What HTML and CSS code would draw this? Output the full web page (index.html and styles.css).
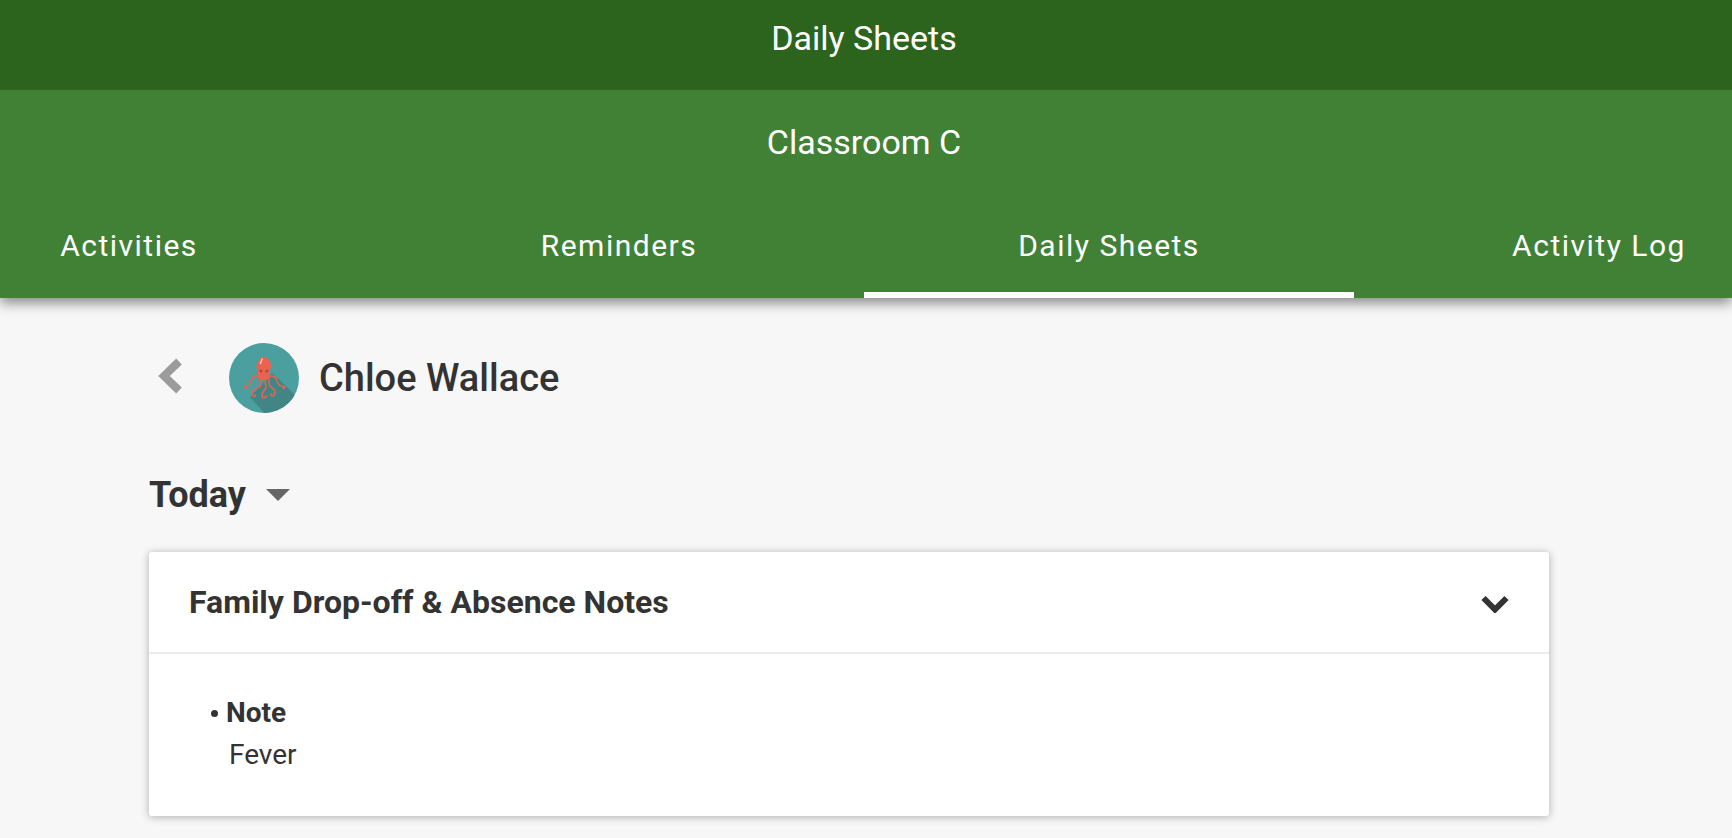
FILE: index.html
```html
<!DOCTYPE html>
<html lang="en">
<head>
    <meta charset="UTF-8">
    <meta name="viewport" content="width=device-width, initial-scale=1.0">
    <title>Daily Sheets</title>
    <link rel="stylesheet" href="styles.css">
</head>
<body>
    <header class="app-bar">Daily Sheets</header>
    <div class="class-bar">
        <div class="class-name">Classroom C</div>
        <nav class="tabs">
            <div class="tabs-row">
                <a class="tab">Activities</a>
                <a class="tab">Reminders</a>
                <a class="tab active">Daily Sheets</a>
                <a class="tab">Activity Log</a>
            </div>
        </nav>
    </div>
    <main class="content">
        <div class="child-row">
            <svg class="back-icon" width="26" height="36" viewBox="0 0 26 36">
                <path d="M21 3.5 L6 18 L21 32.5" fill="none" stroke="#9b9b9b" stroke-width="8"/>
            </svg>
            <svg class="avatar" width="70" height="70" viewBox="0 0 70 70">
                <defs><clipPath id="circle"><circle cx="35" cy="35" r="35"/></clipPath></defs>
                <circle cx="35" cy="35" r="35" fill="#4b9f9f"/>
                <path clip-path="url(#circle)" d="M43 30 L56 42 L72 58 L60 90 L37 72 L21 54 Z" fill="#428585"/>
                <g fill="none" stroke="#e9634f" stroke-width="1.6" stroke-linecap="round" stroke-linejoin="round">
                    <path d="M29 33 C24 33 23 34 22 38 C21 42 19 43 15 44 L17 45.5"/>
                    <path d="M41 33 C46 33 47 34 48 38 C49 42 51 43 56 44 L54 45.5"/>
                    <path d="M32 37 L32 42 C32 45 24 45 23 49 C22 53 26 55 26.5 52"/>
                    <path d="M40 37 L40.5 42 C41 45 47 46 46 50 C45 54 42 53 42 51"/>
                    <path d="M36 37 L37 43 C37.5 47 33 48 33 52 C33 56 37 55 37.5 53"/>
                </g>
                <path d="M35 14 C38 14 40 16 41 19 L43 24 L41 26 L41 35 C39 38 31 38 29 35 L29 26 L27 24 L29 19 C30 16 32 14 35 14 Z" fill="#e9634f"/>
                <path d="M31.5 20.5 L33 16" stroke="#f7d6cf" stroke-width="1.3" stroke-linecap="round"/>
                <circle cx="32" cy="28" r="1.5" fill="#b8473a"/>
                <circle cx="38" cy="28" r="1.5" fill="#b8473a"/>
            </svg>
            <h2 class="child-name">Chloe Wallace</h2>
        </div>
        <div class="date-row">
            <span class="date-label">Today</span>
            <span class="caret"></span>
        </div>
        <section class="card">
            <div class="card-header">
                <h3 class="card-title">Family Drop-off &amp; Absence Notes</h3>
                <svg class="expand-icon" width="28" height="18" viewBox="0 0 28 18">
                    <path d="M2.5 3 L14 14.5 L25.5 3" fill="none" stroke="#333" stroke-width="6"/>
                </svg>
            </div>
            <ul class="notes">
                <li>
                    <strong class="note-label">Note</strong>
                    <div class="note-text">Fever</div>
                </li>
            </ul>
        </section>
    </main>
</body>
</html>
```

FILE: styles.css
```css
html, body { height: 100%; }
body { margin: 0; background: #f7f7f7; color: #333; font-family: Roboto, Arial, sans-serif; overflow: hidden; }

.app-bar { height: 90px; line-height: 76px; padding-right: 4px; background: #2c641e; color: #fff; font-size: 34px; text-align: center; position: relative; z-index: 1; }

.class-bar { background: #418135; color: #fff; box-shadow: 0 5px 12px rgba(0,0,0,0.45); position: relative; }
.class-name { height: 104px; line-height: 104px; padding-right: 4px; font-size: 34px; text-align: center; }

.tabs { overflow: hidden; height: 104px; }
.tabs-row { display: flex; margin-left: -116px; width: 1960px; }
.tab { width: 490px; height: 104px; line-height: 104px; text-align: center; font-size: 30px; letter-spacing: 1.5px; box-sizing: border-box; }
.tab.active { border-bottom: 6px solid #fff; }

.content { padding: 0 183px 0 149px; }

.child-row { display: flex; align-items: center; padding: 45px 0 0 9px; }
.back-icon { margin: 0 45px 4px 0; }
.avatar { margin-right: 20px; }
.child-name { margin: 0; font-size: 38px; font-weight: 500; }

.date-row { display: flex; align-items: center; margin-top: 57px; }
.date-label { font-size: 36px; font-weight: 700; line-height: 50px; }
.caret { margin-left: 20px; border-top: 12px solid #666; border-left: 12px solid transparent; border-right: 12px solid transparent; }

.card { margin-top: 32px; background: #fff; border-radius: 3px; box-shadow: 0 1px 9px rgba(0,0,0,0.3); }
.card-header { display: flex; align-items: center; justify-content: space-between; height: 100px; padding: 0 40px; border-bottom: 2px solid #ececec; }
.card-title { margin: 0; font-size: 32px; font-weight: 700; }
.expand-icon { margin-top: 4px; }

.notes { margin: 0; padding: 40px 0 42px 61px; list-style: none; font-size: 28px; }
.notes li { position: relative; }
.notes li::before { content: ""; position: absolute; left: 1px; top: 16px; width: 7px; height: 7px; border-radius: 50%; background: #333; }
.note-label { display: block; margin-left: 16px; line-height: 38px; font-weight: 700; }
.note-text { margin-left: 19px; margin-top: 4px; line-height: 38px; }
```
